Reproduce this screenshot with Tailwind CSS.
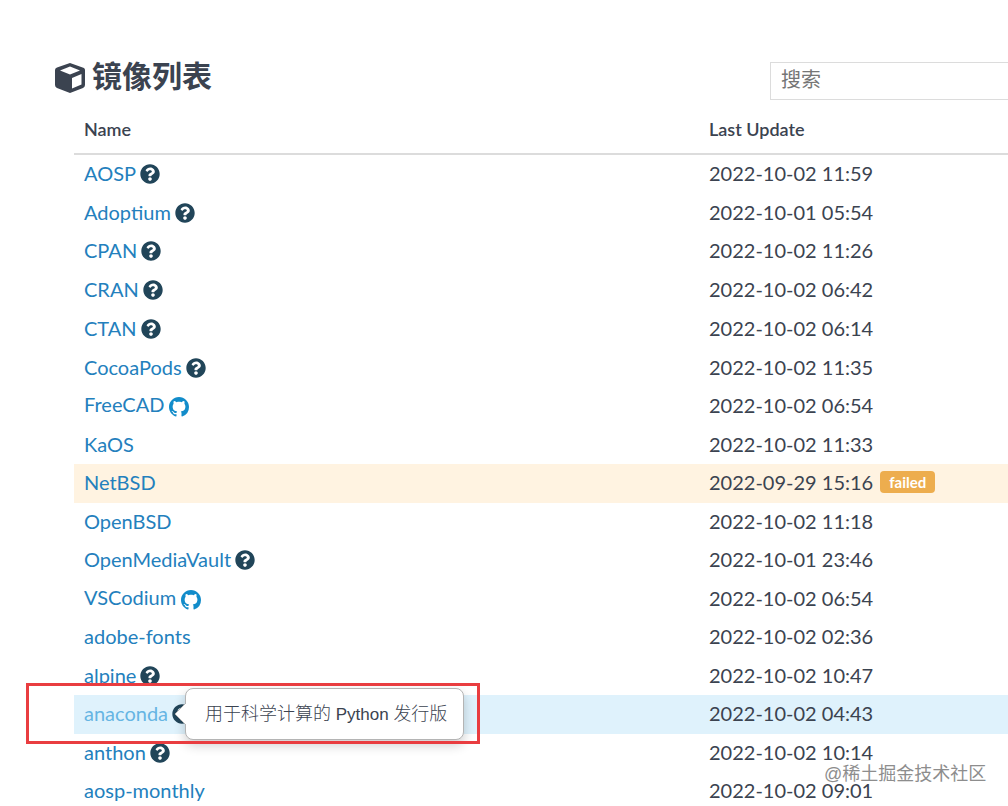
<!DOCTYPE html>
<html lang="zh">
<head>
<meta charset="utf-8">
<title>镜像列表</title>
<script src="https://cdn.jsdelivr.net/npm/@tailwindcss/browser@4"></script>
</head>
<body class="bg-white font-['Lato','Noto_Sans_CJK_SC',sans-serif] text-[#3b4350]">
<svg class="hidden">
  <symbol id="help" viewBox="0 0 512 512"><path fill="currentColor" d="M504 256c0 137-111 248-248 248S8 393 8 256 119 8 256 8s248 111 248 248zM262.700 90c-54.500 0-89.300 23-116.500 63.800-3.500 5.300-2.400 12.400 2.700 16.300l34.700 26.300c5.200 3.900 12.600 3 16.700-2.100 17.900-22.700 30.100-35.800 57.300-35.800 20.400 0 45.700 13.100 45.700 33 0 15-12.400 22.700-32.500 34C247.100 238.500 216 254.900 216 296v4c0 6.600 5.400 12 12 12h56c6.600 0 12-5.400 12-12v-1.300c0-28.500 83.200-29.600 83.200-106.700 0-58-60.200-102-116.500-102zM256 338c-25.400 0-46 20.600-46 46s20.600 46 46 46 46-20.600 46-46-20.600-46-46-46z"/></symbol>
  <symbol id="github" viewBox="0 0 16 16"><path fill="currentColor" d="M8 0C3.580 0 0 3.580 0 8c0 3.540 2.290 6.530 5.470 7.590.4.070.55-.17.55-.38 0-.19-.01-.82-.01-1.490-2.010.37-2.530-.49-2.690-.94-.09-.23-.48-.94-.82-1.130-.28-.15-.68-.52-.01-.53.63-.01 1.080.58 1.230.82.72 1.210 1.870.87 2.330.66.070-.52.28-.87.51-1.070-1.780-.2-3.640-.89-3.640-3.950 0-.87.31-1.590.82-2.150-.08-.2-.36-1.020.08-2.120 0 0 .67-.21 2.200.82.64-.18 1.320-.27 2-.27s1.360.09 2 .27c1.530-1.040 2.200-.82 2.200-.82.44 1.100.16 1.920.08 2.120.51.56.82 1.270.82 2.150 0 3.070-1.870 3.750-3.650 3.950.29.25.54.73.54 1.480 0 1.070-.01 1.930-.01 2.200 0 .21.15.46.55.38A8.010 8.010 0 0 0 16 8c0-4.420-3.580-8-8-8z"/></symbol>
</svg>
<main class="relative h-screen overflow-hidden pt-[58px]">
  <header class="flex h-[48px] items-start justify-between pl-[54px]">
    <h1 class="flex items-start gap-[6px] text-[30px] leading-[34px] font-bold">
      <svg class="mt-1 h-8 w-8" viewBox="0 0 32 32" aria-hidden="true"><path fill="currentColor" fill-rule="evenodd" d="M16 1 30 6Q31 7 31 8V23Q31 25 29 26L16 31 3 26Q1 25 1 23V8Q1 6 3 5.500ZM16 4.500 6 8.500 16 12.500 26 8.500ZM18 16V26.500L27.500 22.500V12Z"/></svg>
      镜像列表
    </h1>
    <input type="search" aria-label="搜索" placeholder="搜索" class="mt-1 h-[38px] w-[238px] border-y border-l border-[#dcdcdc] px-[10px] pb-1 text-xl outline-none placeholder:text-[#757575]">
  </header>
  <div class="pl-[74px]">
    <table class="w-full table-fixed border-separate border-spacing-0 text-left text-xl leading-6 [&_td]:pt-0 [&_td]:pb-[6px] [&_td]:pl-[10px] [&_th]:pb-[2px] [&_tbody_tr]:h-[38px] [&_tbody_tr:nth-child(odd)]:h-[39px] [&_tbody_tr:nth-child(4)]:h-[39px] [&_a]:text-[#2380bd] [&_a]:align-middle [&_time]:align-middle [&_svg]:ml-1 [&_svg]:mt-[3px] [&_svg]:inline-block [&_svg]:align-middle [&_svg]:size-5 [&_svg]:text-[#214559]">
      <thead>
        <tr class="h-[49px] text-lg"><th class="w-[635px] border-b-2 border-[#dcdcdc] pl-[10px] font-semibold">Name</th><th class="border-b-2 border-[#dcdcdc] font-semibold">Last Update</th></tr>
      </thead>
      <tbody>
        <tr><td><a href="#">AOSP</a><svg><use href="#help"/></svg></td><td class="pl-0!"><time>2022-10-02 11:59</time></td></tr>
        <tr><td><a href="#">Adoptium</a><svg><use href="#help"/></svg></td><td class="pl-0!"><time>2022-10-01 05:54</time></td></tr>
        <tr><td><a href="#">CPAN</a><svg><use href="#help"/></svg></td><td class="pl-0!"><time>2022-10-02 11:26</time></td></tr>
        <tr><td><a href="#">CRAN</a><svg><use href="#help"/></svg></td><td class="pl-0!"><time>2022-10-02 06:42</time></td></tr>
        <tr><td><a href="#">CTAN</a><svg><use href="#help"/></svg></td><td class="pl-0!"><time>2022-10-02 06:14</time></td></tr>
        <tr><td><a href="#">CocoaPods</a><svg><use href="#help"/></svg></td><td class="pl-0!"><time>2022-10-02 11:35</time></td></tr>
        <tr><td><a href="#">FreeCAD<svg class="mt-0! ml-[5px]! text-[#128cca]!"><use href="#github"/></svg></a></td><td class="pl-0!"><time>2022-10-02 06:54</time></td></tr>
        <tr><td><a href="#">KaOS</a></td><td class="pl-0!"><time>2022-10-02 11:33</time></td></tr>
        <tr class="bg-[#fff3e1]"><td><a href="#">NetBSD</a></td><td class="pl-0!"><time>2022-09-29 15:16</time><span class="ml-[7px] inline-block rounded-sm bg-[#edad4e] px-[9px] align-middle text-[15px] leading-[22px] font-bold text-white">failed</span></td></tr>
        <tr><td><a href="#">OpenBSD</a></td><td class="pl-0!"><time>2022-10-02 11:18</time></td></tr>
        <tr><td><a href="#">OpenMediaVault</a><svg><use href="#help"/></svg></td><td class="pl-0!"><time>2022-10-01 23:46</time></td></tr>
        <tr><td><a href="#">VSCodium<svg class="mt-0! ml-[5px]! text-[#128cca]!"><use href="#github"/></svg></a></td><td class="pl-0!"><time>2022-10-02 06:54</time></td></tr>
        <tr><td><a href="#">adobe-fonts</a></td><td class="pl-0!"><time>2022-10-02 02:36</time></td></tr>
        <tr><td><a href="#">alpine</a><svg><use href="#help"/></svg></td><td class="pl-0!"><time>2022-10-02 10:47</time></td></tr>
        <tr class="bg-[#dff2fc]"><td><a href="#" class="text-[#66b5e3]!">anaconda</a><svg><use href="#help"/></svg></td><td class="pl-0!"><time>2022-10-02 04:43</time></td></tr>
        <tr><td><a href="#">anthon</a><svg><use href="#help"/></svg></td><td class="pl-0!"><time>2022-10-02 10:14</time></td></tr>
        <tr><td><a href="#">aosp-monthly</a></td><td class="pl-0!"><time>2022-10-02 09:01</time></td></tr>
      </tbody>
    </table>
  </div>
  <div role="tooltip" class="absolute top-[688px] left-[185px] h-[52px] w-[279px] rounded-lg border border-[#b4b4b4] bg-white pl-[19px] font-['Liberation_Sans','Noto_Sans_CJK_SC',sans-serif] text-lg leading-[50px] font-light whitespace-nowrap shadow-[0_5px_12px_rgba(0,0,0,0.2)]">
    <svg class="absolute top-[13px] -left-[12px] h-6 w-[13px]" viewBox="0 0 13 24"><path fill="white" d="M13 0 1 12 13 24Z"/><path fill="none" stroke="#b4b4b4" d="M12 1 1 12 12 23"/></svg>
    用于科学计算的<span class="text-[17px]"> Python </span>发行版
  </div>
  <div class="absolute top-[683px] left-[26px] h-[61px] w-[454px] border-3 border-[#e93d40]"></div>
  <div class="absolute top-[762px] left-[824px] font-['Liberation_Sans','Noto_Sans_CJK_SC',sans-serif] text-lg leading-6 whitespace-nowrap text-[#8d8d8d] [text-shadow:1px_1px_1px_white,-1px_-1px_1px_white]">@稀土掘金技术社区</div>
</main>
</body>
</html>
